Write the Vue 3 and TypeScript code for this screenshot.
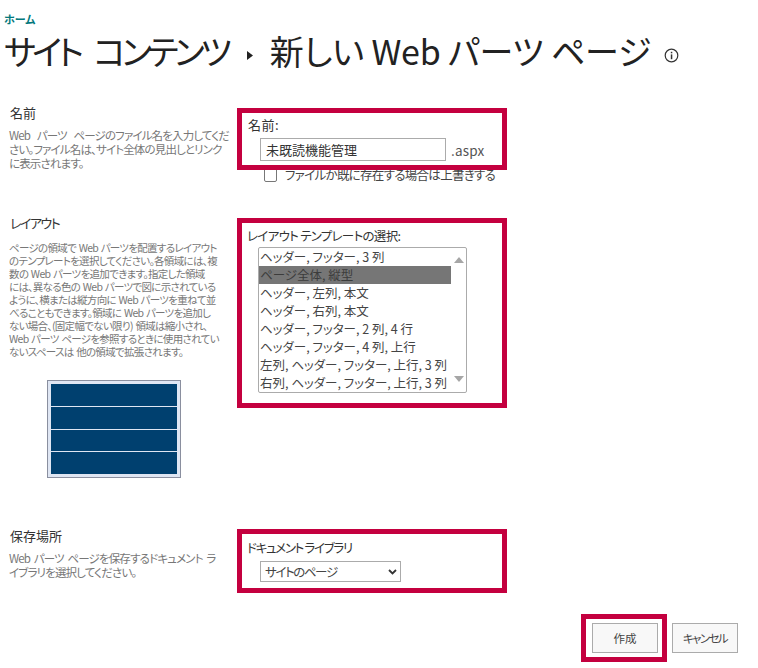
<script setup lang="ts">
const layouts: string[] = [
  'ヘッダー, フッター, 3 列',
  'ページ全体, 縦型',
  'ヘッダー, 左列, 本文',
  'ヘッダー, 右列, 本文',
  'ヘッダー, フッター, 2 列, 4 行',
  'ヘッダー, フッター, 4 列, 上行',
  '左列, ヘッダー, フッター, 上行, 3 列',
  '右列, ヘッダー, フッター, 上行, 3 列',
]
</script>

<template>
  <div class="page">
    <header class="head">
      <a class="home">ホーム</a>
      <h1 class="title">
        <span class="t-first">サイト コンテンツ</span>
        <svg class="crumb" width="6" height="9" viewBox="0 0 6 9"><path d="M0 0 L6 4.5 L0 9 Z" fill="#222" /></svg>
        <span class="t-second">新しい Web パーツ ページ</span>
        <svg class="info" width="15" height="15" viewBox="0 0 15 15">
          <circle cx="7.5" cy="7.5" r="6.3" fill="none" stroke="#333" stroke-width="1.2" />
          <rect x="6.8" y="6.4" width="1.5" height="4.8" fill="#333" />
          <rect x="6.8" y="3.8" width="1.5" height="1.5" fill="#333" />
        </svg>
      </h1>
    </header>

    <section class="row row-name">
      <div class="side">
        <h2>名前</h2>
        <p class="desc">Web パーツ ページのファイル名を入力してくだ<br />さい。ファイル名は、サイト全体の見出しとリンク<br />に表示されます。</p>
      </div>
      <div class="main">
        <div class="box box-name">
          <label class="lab lab-name">名前:</label>
          <div class="name-line">
            <input class="text" type="text" value="未既読機能管理" />
            <span class="ext">.aspx</span>
          </div>
        </div>
        <label class="over">
          <span class="check"></span>
          <span>ファイルか既に存在する場合は上書きする</span>
        </label>
      </div>
    </section>

    <section class="row row-layout">
      <div class="side">
        <h2 class="tight">レイアウト</h2>
        <p class="desc small">ページの領域で Web パーツを配置するレイアウト<br />のテンプレートを選択してください。各領域には、複<br />数の Web パーツを追加できます。指定した領域<br />には、異なる色の Web パーツで図に示されている<br />ように、横または縦方向に Web パーツを重ねて並<br />べることもできます。領域に Web パーツを追加し<br />ない場合、(固定幅でない限り) 領域は縮小され、<br />Web パーツ ページを参照するときに使用されてい<br />ないスペースは 他の領域で拡張されます。</p>
        <div class="preview">
          <div class="cell"></div>
          <div class="cell"></div>
          <div class="cell"></div>
          <div class="cell"></div>
        </div>
      </div>
      <div class="main">
        <div class="box box-layout">
          <label class="lab">レイアウト テンプレートの選択:</label>
          <div class="list">
            <ul class="items">
              <li v-for="(item, i) in layouts" :key="item" :class="{ sel: i === 1 }">{{ item }}</li>
            </ul>
            <div class="bar">
              <svg width="10" height="6" viewBox="0 0 10 6"><path d="M5 0 L10 6 L0 6 Z" fill="#a6a6a6" /></svg>
              <svg width="10" height="6" viewBox="0 0 10 6"><path d="M0 0 L10 0 L5 6 Z" fill="#a6a6a6" /></svg>
            </div>
          </div>
        </div>
      </div>
    </section>

    <section class="row row-lib">
      <div class="side side-lib">
        <h2>保存場所</h2>
        <p class="desc">Web パーツ ページを保存するドキュメント ラ<br />イブラリを選択してください。</p>
      </div>
      <div class="main">
        <div class="box box-lib">
          <label class="lab lab-doc">ドキュメント ライブラリ</label>
          <div class="pick">
            <span>サイトのページ</span>
            <svg width="9" height="6" viewBox="0 0 9 6"><path d="M1 1 L4.5 4.5 L8 1" fill="none" stroke="#333" stroke-width="1.8" /></svg>
          </div>
        </div>
      </div>
    </section>

    <footer class="actions">
      <div class="box box-btn"><button class="btn" type="button">作成</button></div>
      <button class="btn btn-cancel" type="button">キャンセル</button>
    </footer>
  </div>
</template>

<style>
html, body { margin: 0; background: #fff; }
</style>

<style scoped>
.page {
  width: 758px;
  height: 668px;
  overflow: hidden;
  box-sizing: border-box;
  font-family: "Noto Sans CJK JP", "Noto Sans", sans-serif;
  font-feature-settings: "palt";
  color: #444;
}
.head { height: 108px; padding: 12px 0 0 4px; box-sizing: border-box; }
.home { display: block; font-size: 11px; line-height: 15px; font-weight: 700; color: #03787c; }
.title {
  display: flex;
  align-items: center;
  margin: 1px 0 0;
  font-size: 34px;
  line-height: 46px;
  font-weight: 400;
  color: #222;
  white-space: nowrap;
}
.t-first { letter-spacing: -4.1px; word-spacing: 10px; }
.t-second { letter-spacing: -0.2px; }
.crumb { margin: 8px 17px 0 19px; }
.info { margin: 8px 0 0 13px; }
.row { display: grid; grid-template-columns: 237px 270px; }
.row-name { height: 110px; }
.row-layout { height: 311px; }
.row-lib { height: 85px; }
.side { padding: 0 0 0 10px; }
h2 { margin: -4px 0 0; font-size: 13px; line-height: 18px; font-weight: 400; color: #333; }
h2.tight { letter-spacing: -1.5px; }
.side-lib h2 { margin-top: -2px; }
.desc { margin: 6px 0 0 -1px; font-size: 11.5px; line-height: 14px; letter-spacing: -0.85px; word-spacing: 5px; color: #777; white-space: nowrap; }
.side-lib .desc { word-spacing: 2px; }
.desc.small { margin-top: 9px; font-size: 10.5px; line-height: 13px; letter-spacing: -0.7px; word-spacing: 1px; }
.preview {
  width: 126px;
  height: 90px;
  margin: 22px 0 0 37px;
  padding: 3px;
  border: 1px solid #8a8f9f;
  background: #dfe6f3;
  display: flex;
  flex-direction: column;
  gap: 1px;
}
.cell { flex: 1; background: #00406f; }
.box { border: 5px solid #c4003f; box-sizing: border-box; position: relative; z-index: 1; }
.box-name { height: 62px; padding: 3px 0 0 6px; }
.box-layout { height: 190px; padding: 4px 0 0 5px; }
.box-lib { height: 64px; padding: 5px 0 0 5px; }
.lab { display: block; font-size: 12.5px; line-height: 18px; letter-spacing: -0.7px; color: #333; }
.lab-name { font-size: 13px; letter-spacing: 0.5px; margin-bottom: 1px; }
.lab-doc { letter-spacing: -1.3px; }
.name-line { display: flex; align-items: center; margin: 4px 0 0 12px; }
.text {
  width: 186px;
  height: 23px;
  box-sizing: border-box;
  border: 1px solid #ababab;
  padding: 0 5px;
  font: inherit;
  font-size: 13px;
  color: #333;
  outline: none;
}
.ext { margin-left: 5px; font-size: 13.5px; letter-spacing: 0.2px; color: #555; }
.over {
  display: flex;
  align-items: center;
  gap: 8px;
  margin: -3px 0 0 27px;
  font-size: 12.5px;
  line-height: 16px;
  letter-spacing: -0.7px;
  white-space: nowrap;
  color: #444;
}
.check { flex: none; width: 11px; height: 12px; border: 1px solid #777; border-radius: 2px; background: #fff; }
.list {
  display: flex;
  width: 209px;
  height: 146px;
  margin: 2px 0 0 11px;
  box-sizing: border-box;
  border: 1px solid #ababab;
  border-radius: 2px;
}
.items { list-style: none; margin: 0; padding: 0; width: 192px; }
.items li { height: 18px; padding-left: 1px; font-size: 12.5px; line-height: 18px; color: #444; white-space: nowrap; }
.items li.sel { background: #767676; color: #3c3c3c; }
.bar {
  flex: 1;
  display: flex;
  flex-direction: column;
  justify-content: space-between;
  align-items: center;
  padding: 9px 0 10px;
}
.pick {
  display: flex;
  align-items: center;
  justify-content: space-between;
  width: 141px;
  height: 21px;
  margin: 4px 0 0 13px;
  padding: 0 3px 0 4px;
  box-sizing: border-box;
  border: 1px solid #ababab;
  font-size: 12.5px;
  letter-spacing: -1.4px;
  color: #444;
}
.actions { display: flex; align-items: flex-start; margin: 0 0 0 581px; gap: 5px; }
.box-btn { padding: 4px 4px 4px 6px; width: 86px; height: 48px; }
.btn {
  width: 66px;
  height: 30px;
  border: 1px solid #ababab;
  background: #f8f8f8;
  font: inherit;
  font-size: 11.5px;
  color: #444;
  padding: 0;
}
.btn-cancel { letter-spacing: -1.6px; }
.actions > .btn { margin-top: 9px; }
</style>
